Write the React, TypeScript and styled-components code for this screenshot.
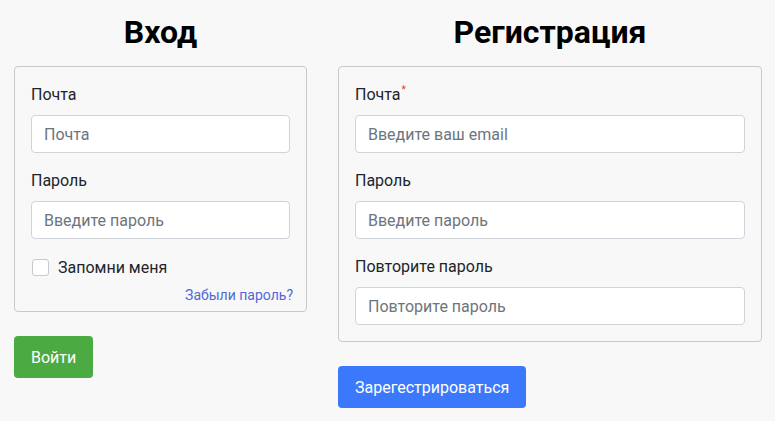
import React from "react";
import styled, { createGlobalStyle } from "styled-components";

const GlobalStyle = createGlobalStyle`
  html, body {
    margin: 0;
    padding: 0;
    background: #f8f8f8;
    font-family: Roboto, "Noto Sans", Arial, sans-serif;
    color: #212529;
  }
  * { box-sizing: border-box; }
`;

const Page = styled.div`
  display: grid;
  grid-template-columns: 293px 424px;
  column-gap: 31px;
  padding: 13px 13px 0 14px;
`;

const Column = styled.section`
  display: flex;
  flex-direction: column;
`;

const Title = styled.h1`
  margin: 0 0 15px;
  font-size: 32px;
  line-height: 38px;
  font-weight: 700;
  text-align: center;
  color: #000;
`;

const Card = styled.form<{ $padBottom: number }>`
  display: flex;
  flex-direction: column;
  border: 1px solid #c9c9c9;
  border-radius: 4px;
  background: #f8f8f8;
  padding: 16px 16px ${(p) => p.$padBottom}px;
`;

const Field = styled.div`
  display: flex;
  flex-direction: column;
  & + & {
    margin-top: 16px;
  }
`;

const Label = styled.label`
  font-size: 16px;
  line-height: 24px;
  margin-bottom: 8px;
  color: #212529;
`;

const Required = styled.sup`
  color: #e53935;
  font-size: 10px;
  line-height: 0;
  vertical-align: 0;
  position: relative;
  top: -7px;
  margin-left: 1px;
`;

const Input = styled.input`
  height: 38px;
  width: 100%;
  border: 1px solid #ced4da;
  border-radius: 4px;
  background: #fff;
  padding: 0 12px;
  font-family: inherit;
  font-size: 16px;
  color: #212529;
  outline: none;
  &::placeholder {
    color: #6c757d;
  }
`;

const CheckRow = styled.label`
  display: flex;
  align-items: center;
  gap: 9px;
  margin-top: 16px;
  height: 24px;
  font-size: 16px;
  color: #212529;
`;

const Box = styled.span`
  width: 17px;
  height: 17px;
  border: 1px solid #c6c9cd;
  border-radius: 3px;
  background: #fff;
  margin-left: 1px;
`;

const Forgot = styled.a`
  align-self: flex-end;
  margin: 6px -3px 0 0;
  font-size: 14px;
  line-height: 20px;
  color: #5068d6;
  text-decoration: none;
`;

const Button = styled.button<{ $color: string }>`
  align-self: flex-start;
  margin-top: 24px;
  height: 42px;
  padding: 0 17px;
  border: none;
  border-radius: 4px;
  background: ${(p) => p.$color};
  color: #fff;
  font-family: inherit;
  font-size: 16px;
  font-weight: 400;
`;

export default function App() {
  return (
    <>
      <GlobalStyle />
      <Page>
        <Column>
          <Title>Вход</Title>
          <Card $padBottom={6}>
            <Field>
              <Label>Почта</Label>
              <Input placeholder="Почта" />
            </Field>
            <Field>
              <Label>Пароль</Label>
              <Input type="password" placeholder="Введите пароль" />
            </Field>
            <CheckRow>
              <Box />
              Запомни меня
            </CheckRow>
            <Forgot href="#">Забыли пароль?</Forgot>
          </Card>
          <Button $color="#4caa42">Войти</Button>
        </Column>
        <Column>
          <Title>Регистрация</Title>
          <Card $padBottom={16}>
            <Field>
              <Label>
                Почта<Required>*</Required>
              </Label>
              <Input placeholder="Введите ваш email" />
            </Field>
            <Field>
              <Label>Пароль</Label>
              <Input type="password" placeholder="Введите пароль" />
            </Field>
            <Field>
              <Label>Повторите пароль</Label>
              <Input type="password" placeholder="Повторите пароль" />
            </Field>
          </Card>
          <Button $color="#3b78fb">Зарегестрироваться</Button>
        </Column>
      </Page>
    </>
  );
}
